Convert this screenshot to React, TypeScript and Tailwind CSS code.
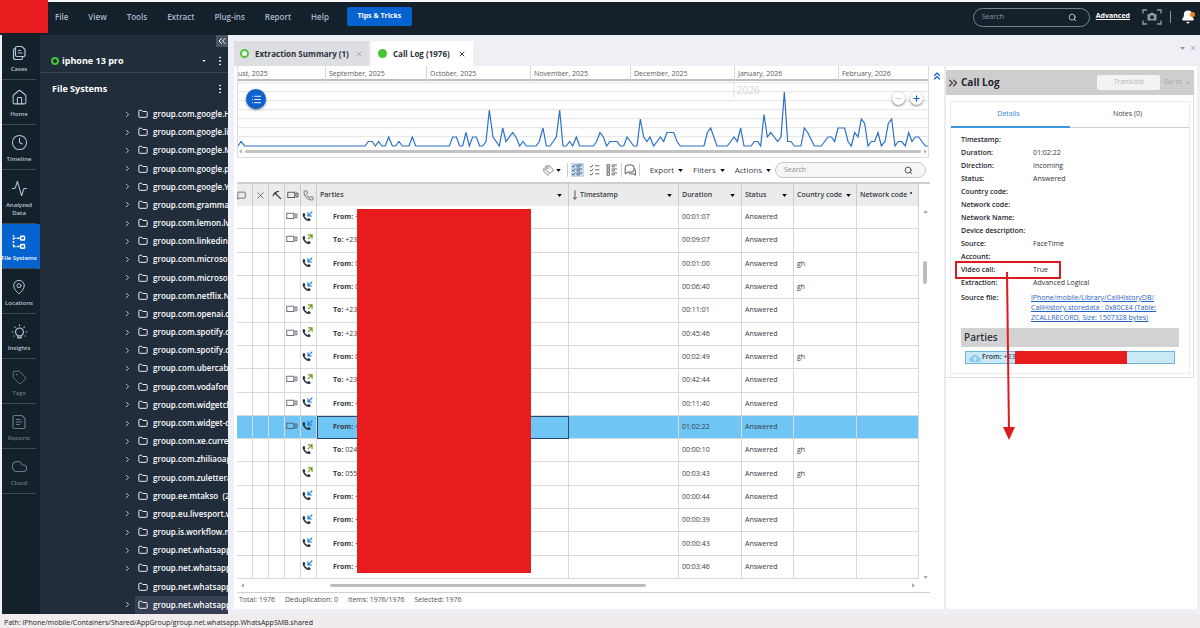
import React from "react";
import {
  Activity,
  Bell,
  ChevronRight,
  ChevronsLeft,
  ChevronsRight,
  ChevronsUp,
  Clock4,
  Cloud,
  EllipsisVertical,
  Folder,
  House,
  List,
  MapPin,
  MessageSquare,
  Minus,
  MoveDown,
  Phone,
  Plus,
  Search,
  Tag,
  Tags,
  X,
} from "lucide-react";

const menuItems = ["File", "View", "Tools", "Extract", "Plug-ins", "Report", "Help"];

const folders = [
  "group.com.google.H",
  "group.com.google.li",
  "group.com.google.M",
  "group.com.google.p",
  "group.com.google.Y",
  "group.com.grammar",
  "group.com.lemon.lv",
  "group.com.linkedin.",
  "group.com.microsof",
  "group.com.microsof",
  "group.com.netflix.N",
  "group.com.openai.cl",
  "group.com.spotify.cl",
  "group.com.spotify.cl",
  "group.com.ubercab.",
  "group.com.vodafone",
  "group.com.widgetcl",
  "group.com.widget-c",
  "group.com.xe.curren",
  "group.com.zhiliaoap",
  "group.com.zulettera",
  "group.ee.mtakso  (2",
  "group.eu.livesport.w",
  "group.is.workflow.m",
  "group.net.whatsapp",
  "group.net.whatsapp",
  "group.net.whatsapp",
  "group.net.whatsapp",
];

const months = [
  "ust, 2025",
  "September, 2025",
  "October, 2025",
  "November, 2025",
  "December, 2025",
  "January, 2026",
  "February, 2026",
];

type Call = { dir: "From" | "To"; num: string; video: boolean; time: string; code?: string; selected?: boolean };

const calls: Call[] = [
  { dir: "From", num: "+", video: true, time: "00:01:07" },
  { dir: "To", num: "+23", video: true, time: "00:09:07" },
  { dir: "From", num: "0", video: false, time: "00:01:00", code: "gh" },
  { dir: "From", num: "0", video: false, time: "00:06:40", code: "gh" },
  { dir: "To", num: "+23", video: true, time: "00:11:01" },
  { dir: "To", num: "+23", video: true, time: "00:45:46" },
  { dir: "From", num: "0", video: false, time: "00:02:49", code: "gh" },
  { dir: "To", num: "+23", video: true, time: "00:42:44" },
  { dir: "From", num: "+", video: true, time: "00:11:40" },
  { dir: "From", num: "+", video: true, time: "01:02:22", selected: true },
  { dir: "To", num: "024", video: false, time: "00:00:10", code: "gh" },
  { dir: "To", num: "055", video: false, time: "00:03:43", code: "gh" },
  { dir: "From", num: "+", video: false, time: "00:00:44" },
  { dir: "From", num: "+", video: false, time: "00:00:39" },
  { dir: "From", num: "+", video: false, time: "00:00:43" },
  { dir: "From", num: "+", video: false, time: "00:03:46" },
];

const details: [string, string][] = [
  ["Timestamp:", ""],
  ["Duration:", "01:02:22"],
  ["Direction:", "Incoming"],
  ["Status:", "Answered"],
  ["Country code:", ""],
  ["Network code:", ""],
  ["Network Name:", ""],
  ["Device description:", ""],
  ["Source:", "FaceTime"],
  ["Account:", ""],
  ["Video call:", "True"],
  ["Extraction:", "Advanced Logical"],
];

// Pairs of horizontal position and number of calls.
const activity: [number, number][] = [
  [0, 0], [9, 1], [20, 0], [381, 0], [391, 1], [403, 1], [412, 0], [422, 1], [432, 0], [442, 0], [452, 2], [463, 0],
  [473, 0], [483, 1], [493, 0], [513, 0], [523, 2], [533, 0], [634, 0], [644, 2], [655, 2], [665, 0], [674, 0],
  [684, 3], [694, 0], [704, 2], [715, 2], [725, 0], [734, 0], [744, 1], [754, 8], [765, 2], [784, 0], [794, 4],
  [804, 1], [824, 3], [834, 2], [845, 0], [855, 1], [865, 0], [894, 0], [904, 1], [915, 4], [925, 0], [936, 0],
  [955, 2], [965, 8], [975, 0], [985, 0], [995, 1], [1004, 0], [1015, 2], [1025, 0], [1066, 0], [1076, 1],
  [1086, 3], [1096, 2], [1106, 0], [1116, 1], [1137, 1], [1147, 0], [1157, 0], [1167, 2], [1187, 0], [1197, 0],
  [1207, 6], [1217, 2], [1227, 1], [1236, 2], [1247, 0], [1267, 2], [1277, 1], [1287, 3], [1307, 3], [1317, 1],
  [1327, 0], [1398, 0], [1408, 3], [1418, 4], [1437, 0], [1468, 0], [1488, 2], [1498, 1], [1508, 4], [1518, 0],
  [1539, 0], [1549, 1], [1559, 1], [1568, 0], [1578, 7], [1588, 2], [1598, 3], [1619, 1], [1629, 2], [1639, 12],
  [1649, 1], [1659, 1], [1669, 0], [1689, 0], [1699, 4], [1709, 3], [1729, 0], [1750, 0], [1770, 2], [1780, 2],
  [1790, 1], [1800, 4], [1820, 4], [1830, 1], [1840, 0], [1850, 3], [1860, 2], [1870, 6], [1880, 5], [1890, 0],
  [1900, 1], [1910, 1], [1920, 3], [1930, 0], [1941, 1], [1951, 5], [1961, 6], [1971, 0], [1981, 1], [1991, 1],
  [2002, 0], [2012, 3], [2022, 1], [2032, 2], [2042, 2], [2062, 0], [2070, 0],
];

function Caret({ className = "" }: { className?: string }) {
  return (
    <svg viewBox="0 0 6 4" aria-hidden="true" className={"h-[3px] w-[5px] shrink-0 " + className}>
      <path d="M0 0h6L3 4z" fill="currentColor" />
    </svg>
  );
}

function CasesGlyph() {
  return (
    <svg viewBox="0 0 16 16" className="h-4 w-4" fill="none" stroke="currentColor" strokeWidth="1.200" aria-hidden="true">
      <path d="M6 1.500h4.800L14 4.500V10a1.500 1.500 0 0 1-1.500 1.500H6A1.500 1.500 0 0 1 4.500 10V3A1.500 1.500 0 0 1 6 1.500z" />
      <path d="M7 5.500h3M7 8h4.500M4.500 3.500H4A1.500 1.500 0 0 0 2.500 5v7.500A2 2 0 0 0 4.500 14.500H10a1.500 1.500 0 0 0 1.500-1.500v-1.500" />
    </svg>
  );
}

function TreeGlyph() {
  return (
    <svg viewBox="0 0 16 16" className="h-4 w-4" fill="none" stroke="currentColor" strokeWidth="1.500" aria-hidden="true">
      <path d="M2.500 1v1.500M2.500 3.700v2M2.500 7v2M2.500 10.200v2M2 4.200h2.500M5.700 4.200h3M2 12.500h2.500M5.700 12.500h3" />
      <rect x="9.700" y="2.300" width="3.800" height="3.800" rx="0.600" />
      <rect x="9.700" y="10.500" width="3.800" height="3.800" rx="0.600" />
    </svg>
  );
}

function BulbGlyph() {
  return (
    <svg viewBox="0 0 18 18" className="h-[17px] w-[17px]" fill="none" stroke="currentColor" strokeWidth="1.200" aria-hidden="true">
      <circle cx="9" cy="9.500" r="4.200" />
      <path d="M7.300 13.500v2.200h3.400v-2.200M9 1.500v1.600M3.500 3.800l1.200 1.200M14.500 3.800l-1.200 1.200M.8 9.500h1.600M15.600 9.500h1.600M2.600 14l1-.6M15.400 14l-1-.6" />
    </svg>
  );
}

function ReportGlyph() {
  return (
    <svg viewBox="0 0 16 16" className="h-4 w-4" fill="none" stroke="currentColor" strokeWidth="1.200" aria-hidden="true">
      <path d="M3.500 1.500h7.500l3 3v8.500a1.500 1.500 0 0 1-1.500 1.500h-9A1.500 1.500 0 0 1 2 13V3a1.500 1.500 0 0 1 1.500-1.500z" />
      <path d="M5 5.500h5M5 8h6.500M5 10.500h4" />
    </svg>
  );
}

function CameraGlyph() {
  return (
    <svg viewBox="0 0 20 16" className="h-4 w-5" fill="none" aria-hidden="true">
      <path d="M1 4.500V1h4M15 1h4v3.500M19 11.500V15h-4M5 15H1v-3.500" stroke="#8e98a3" strokeWidth="1.400" />
      <path d="M5.500 5h2l1-1.300h3L12.500 5h2v6.500h-9z" fill="#8e98a3" />
      <circle cx="10" cy="8.200" r="1.900" fill="#14202a" />
    </svg>
  );
}

function CarvedGlyph() {
  return (
    <svg viewBox="0 0 10 10" className="h-2.5 w-2.5" fill="none" stroke="currentColor" strokeWidth="1.100" aria-hidden="true">
      <path d="M3 3l6 6M1 6.200C1.200 3.800 3.500 1.500 7 1.400" />
      <path d="M1.600 4.200L4.200 1.700 4.800 3 3 4.800z" fill="currentColor" stroke="none" />
    </svg>
  );
}

function ChatGlyph() {
  return (
    <svg viewBox="0 0 12 12" className="h-3 w-3" fill="none" stroke="currentColor" strokeWidth="0.900" aria-hidden="true">
      <path d="M3.500 1h4a2.500 2.500 0 0 1 2.500 2.500v2A2.500 2.500 0 0 1 7.500 8H3.800L1.200 10V3.500A2.500 2.500 0 0 1 3.500 1z" />
      <path d="M10.200 4.500c.8.500 1.100 1 1.100 2v4.800L9.200 9.800H6.500c-1 0-1.700-.6-2-1.500" />
    </svg>
  );
}

function VideoGlyph() {
  return (
    <svg viewBox="0 0 12 8" className="h-2 w-3 shrink-0" fill="none" stroke="currentColor" strokeWidth="0.800" aria-hidden="true">
      <rect x="0.800" y="1.200" width="7" height="5.400" />
      <path d="M9 2h2v3.800H9z" />
    </svg>
  );
}

function CallGlyph({ incoming }: { incoming: boolean }) {
  return (
    <svg viewBox="0 0 11 11" className="h-[11px] w-[11px] shrink-0" fill="none" aria-hidden="true">
      <path d="M1.700 2.600C.4 4.800 4 9.800 7.800 9.200" stroke="#27313f" strokeWidth="1.500" />
      <path d="M1.300 2.300l1.200-.2.900 2.300-1.300.9zM5.400 8.300l1-1.200 2.200.9-.3 1.400-1.300.4z" fill="#27313f" />
      {incoming ? (
        <path d="M10.300.7L6.600 4.400M6 1.200v3.800h3.900" stroke="#1a73d4" strokeWidth="1.100" />
      ) : (
        <path d="M6 5L9.700 1.300M6 .9h4.100v4.100" stroke="#6d9a1f" strokeWidth="1.100" />
      )}
    </svg>
  );
}

function ChecklistGlyph({ kind }: { kind: "dense" | "check" | "box" }) {
  return (
    <svg viewBox="0 0 12 12" className="h-3 w-3" fill="none" stroke="currentColor" strokeWidth="0.800" aria-hidden="true">
      {[1, 5, 9].map((y) => (
        <g key={y}>
          {kind === "box" ? (
            <rect x="1" y={y - 0.2} width="2.400" height="2.400" />
          ) : (
            <path d={`M1 ${y + 1}l1.200 1.200L4.200 ${y - 0.4}`} />
          )}
          <path d={kind === "check" ? `M6 ${y + 0.8}h4.500` : `M5.500 ${y}h5.500M5.500 ${y + 1.8}h3.500`} />
        </g>
      ))}
    </svg>
  );
}

const rail: { label: string; icon: React.ReactNode; tone: string }[] = [
  { label: "Cases", icon: <CasesGlyph />, tone: "h-[45px] text-[#b9c3d6]" },
  { label: "Home", icon: <House size={17} strokeWidth={1.5} />, tone: "h-[45px] text-[#b9c3d6]" },
  { label: "Timeline", icon: <Clock4 size={17} strokeWidth={1.5} />, tone: "h-[45px] text-[#b9c3d6]" },
  { label: "Analyzed Data", icon: <Activity size={17} strokeWidth={1.5} />, tone: "h-[54px] text-[#b9c3d6]" },
  { label: "File Systems", icon: <TreeGlyph />, tone: "h-[45px] bg-[#0563cf] text-white" },
  { label: "Locations", icon: <MapPin size={16} strokeWidth={1.5} />, tone: "h-[45px] text-[#b9c3d6]" },
  { label: "Insights", icon: <BulbGlyph />, tone: "h-[45px] text-[#b9c3d6]" },
  { label: "Tags", icon: <Tag size={15} strokeWidth={1.5} />, tone: "h-[45px] text-[#697585]" },
  { label: "Reports", icon: <ReportGlyph />, tone: "h-[45px] text-[#697585]" },
  { label: "Cloud", icon: <Cloud size={17} strokeWidth={1.5} />, tone: "h-[45px] text-[#697585]" },
];

function TopBar() {
  return (
    <header className="flex h-[35px] shrink-0 items-stretch border-t-2 border-[#f4f6f8] bg-[#14202a]">
      <div className="-mt-0.5 h-[33px] w-12 shrink-0 bg-[#e81c1e]" />
      <nav className="flex items-center gap-5 pb-1 pl-[7px] text-[8px] font-semibold text-[#a9b6cf]">
        {menuItems.map((m) => (
          <button key={m}>{m}</button>
        ))}
        <button className="-ml-0.5 h-[19px] w-[65px] rounded-[2px] bg-[#0563cf] text-[7px] font-bold text-white">Tips &amp; Tricks</button>
      </nav>
      <div className="ml-auto flex items-center pr-[5px] pb-[3px]">
        <label className="flex h-[19px] w-[117px] items-center rounded-full border border-[#77828f] px-2 text-[#c3ccd6]">
          <input aria-label="Search everything" placeholder="Search" className="w-full min-w-0 bg-transparent text-[7px] outline-none placeholder:text-[#8d98a5]" />
          <Search size={9} strokeWidth={2.4} className="mr-1 shrink-0" />
        </label>
        <a href="#advanced" className="mb-0.5 ml-1.5 text-[7px] font-bold text-white underline">Advanced</a>
        <button aria-label="Capture screen" className="ml-3"><CameraGlyph /></button>
        <span className="ml-2 h-3 w-px bg-[#8b95a0]" />
        <button aria-label="Notifications" className="relative ml-2.5 text-white">
          <Bell size={14} fill="currentColor" />
          <span className="absolute top-0.5 right-0 h-[5px] w-[5px] rounded-full bg-[#f58220]" />
        </button>
      </div>
    </header>
  );
}

function Rail() {
  return (
    <nav className="w-[38px] shrink-0 bg-[#14202a] text-[6px] leading-2 font-semibold">
      {rail.map((r) => (
        <button key={r.label} className={"relative flex w-full flex-col items-center justify-end gap-1 pr-1 pb-[7px] text-center " + r.tone}>
          {r.icon}
          <span className={r.label === "File Systems" ? "whitespace-nowrap" : "max-w-full"}>{r.label}</span>
          <span className="absolute bottom-0 left-0 h-px w-[34px] bg-[#3b4856]" />
        </button>
      ))}
    </nav>
  );
}

function TreePanel() {
  return (
    <aside className="flex w-[188px] shrink-0 flex-col overflow-hidden bg-[#222d3c] text-white">
      <div className="flex h-[38px] shrink-0 flex-col border-b border-[#3a4656]">
        <button aria-label="Collapse panel" className="flex h-3 w-3 shrink-0 items-center justify-center self-end bg-[#4b5466]">
          <ChevronsLeft size={12} />
        </button>
        <div className="flex items-center pt-1.5 pr-0.5 pl-[11px]">
          <span className="h-2 w-2 rounded-full border-2 border-[#45c531]" />
          <span className="ml-[3px] text-[9px] leading-4 font-bold">iphone 13 pro</span>
          <Caret className="ml-auto h-0.5! w-1!" />
          <EllipsisVertical size={12} className="ml-2" />
        </div>
      </div>
      <div className="flex h-8 shrink-0 items-center pr-0.5 pl-3">
        <h2 className="text-[9px] font-bold">File Systems</h2>
        <EllipsisVertical size={12} className="ml-auto" />
      </div>
      <ul className="flex flex-1 flex-col pl-[83px] text-[8px] font-semibold">
        {folders.map((f, i) => (
          <li key={i} className="flex flex-1 items-center whitespace-nowrap">
            <span className="w-3 shrink-0">{i !== 26 && <ChevronRight size={9} strokeWidth={2.5} className="text-[#c5cddb]" />}</span>
            <span className={"flex flex-1 items-center self-stretch pl-[3px] " + (i === 27 ? "bg-[#363f54]" : "")}>
              <Folder size={10} strokeWidth={2.2} className="mr-[5px] shrink-0" />
              <span className="whitespace-pre">{f}</span>
            </span>
          </li>
        ))}
      </ul>
    </aside>
  );
}

function Timeline() {
  const line = activity.map(([x, n]) => `${x},${195 - n * 13.5}`).join(" ");
  return (
    <section className="relative mr-[15px] ml-[3px] border-x border-b border-[#dcdcdc]" aria-label="Call activity">
      <div className="grid h-[15px] grid-cols-[87fr_101fr_104fr_100fr_104fr_104fr_90fr] border-b-2 border-[#bdbdbd] text-[7px] leading-[15px] text-[#555b62]">
        {months.map((m, i) => (
          <span key={m} className={i ? "border-l border-[#d9d9d9] pl-[3px]" : ""}>{m}</span>
        ))}
      </div>
      <div className="relative h-[68px]">
        <svg viewBox="0 0 2070 204" preserveAspectRatio="none" className="h-full w-full" aria-hidden="true">
          {[5, 32, 59, 86, 113, 140, 167].map((y) => (
            <path key={y} d={`M0 ${y}H2070`} stroke="#e6e4e2" strokeWidth="1" vectorEffect="non-scaling-stroke" />
          ))}
          <path d="M1488 0V50" stroke="#dddddd" vectorEffect="non-scaling-stroke" />
          <polyline points={line} fill="none" stroke="#2b71c8" strokeWidth="1.200" vectorEffect="non-scaling-stroke" />
        </svg>
        <span className="absolute top-0.5 left-[72.300%] text-[10px] text-[#d4d4d4]">2026</span>
        <button aria-label="Legend" className="absolute top-2 left-2 flex h-5 w-5 items-center justify-center rounded-full bg-[#0f62cc] text-white shadow-sm shadow-black/40">
          <List size={11} />
        </button>
        <button aria-label="Zoom out" className="absolute top-[11px] right-[23px] flex h-[13px] w-[13px] items-center justify-center rounded-full bg-white text-[#b9bdc2] shadow-sm shadow-black/40">
          <Minus size={9} />
        </button>
        <button aria-label="Zoom in" className="absolute top-[11px] right-[5px] flex h-[13px] w-[13px] items-center justify-center rounded-full bg-white text-[#0f62cc] shadow-sm shadow-black/40">
          <Plus size={9} strokeWidth={3} />
        </button>
      </div>
      <div className="flex items-center gap-0.5 pt-px pb-1 text-[#b5b5b5]">
        <Caret className="rotate-90" />
        <span className="h-[3px] flex-1 rounded-full bg-[#c2c2c2]" />
        <Caret className="-rotate-90" />
      </div>
    </section>
  );
}

function Toolbar() {
  return (
    <div className="mr-3.5 ml-[3px] flex h-[26px] items-center justify-end border-b-2 border-[#cfcfcf] pr-1 text-[8px] text-[#3b424a]">
      <button aria-label="Tags" className="flex items-center gap-0.5 pr-1.5">
        <Tags size={11} strokeWidth={1.5} />
        <Caret className="text-black" />
      </button>
      <span className="flex items-center gap-[5px] border-x border-[#cccccc] px-[3px]">
        <button aria-label="Detailed list" className="flex h-3.5 w-[13px] items-center justify-center bg-[#bfdcf5]"><ChecklistGlyph kind="dense" /></button>
        <button aria-label="Checked list" className="flex h-3.5 w-3 items-center justify-center"><ChecklistGlyph kind="check" /></button>
        <button aria-label="Simple list" className="flex h-3.5 w-3 items-center justify-center"><ChecklistGlyph kind="box" /></button>
      </span>
      <button aria-label="Conversations" className="border-r border-[#cccccc] pr-[3px] pl-0.5"><ChatGlyph /></button>
      <button className="ml-2.5 flex items-center gap-1">Export <Caret className="text-black" /></button>
      <button className="ml-2.5 flex items-center gap-1">Filters <Caret className="text-black" /></button>
      <button className="ml-2.5 flex items-center gap-1">Actions <Caret className="text-black" /></button>
      <label className="ml-1 flex h-4 w-[151px] items-center rounded-full border border-[#c9c9c9] bg-[#f6f6f6] px-2">
        <input aria-label="Search table" placeholder="Search" className="w-full min-w-0 bg-transparent text-[7px] outline-none placeholder:text-[#8a8f94]" />
        <Search size={9} strokeWidth={2.4} className="mr-1 shrink-0" />
      </label>
    </div>
  );
}

function CallTable() {
  const head = "border-r border-[#cccccc] font-semibold";
  const cell = "border-r border-b border-[#d9d9d9] px-[3px]";
  return (
    <div className="mr-[25px] ml-[3px] flex">
      <div className="relative min-w-0 flex-1">
        <table className="h-[395px] w-full table-fixed border-separate border-spacing-0 text-left text-[7px] leading-3 text-[#343b44]">
          <colgroup>
            <col className="w-4" />
            <col className="w-4" />
            <col className="w-4" />
            <col className="w-4" />
            <col className="w-4" />
            <col className="w-[252px]" />
            <col className="w-[110px]" />
            <col className="w-[63px]" />
            <col className="w-[52px]" />
            <col className="w-[63px]" />
            <col />
          </colgroup>
          <thead className="bg-[#ebebeb]">
            <tr className="h-[22px]">
              <th className={head} aria-label="Notes"><MessageSquare size={9} strokeWidth={1.8} /></th>
              <th className={head} aria-label="Deleted"><X size={11} strokeWidth={1.4} className="mx-auto" /></th>
              <th className={head} aria-label="Carved"><span className="flex justify-center"><CarvedGlyph /></span></th>
              <th className={head} aria-label="Video"><span className="flex justify-center"><VideoGlyph /></span></th>
              <th className={head} aria-label="Direction"><Phone size={11} strokeWidth={1.4} className="mx-auto" /></th>
              <th className={head}><span className="flex items-center justify-between pr-1.5 pl-[3px]">Parties <Caret className="text-black" /></span></th>
              <th className={head}><span className="flex items-center pr-1.5 pl-[3px]"><MoveDown size={10} className="-ml-0.5" />Timestamp <Caret className="ml-auto text-black" /></span></th>
              <th className={head}><span className="flex items-center justify-between pr-1.5 pl-[3px]">Duration <Caret className="text-black" /></span></th>
              <th className={head}><span className="flex items-center justify-between pr-1.5 pl-[3px]">Status <Caret className="text-black" /></span></th>
              <th className={head}><span className="flex items-center justify-between pr-[5px] pl-[3px] whitespace-nowrap">Country code <Caret className="text-black" /></span></th>
              <th className={head}><span className="flex items-center gap-[3px] pl-[3px] whitespace-nowrap">Network code <span className="-mt-1 h-0.5 w-0.5 bg-[#555]" /></span></th>
            </tr>
          </thead>
          <tbody>
            {calls.map((c) => (
              <tr key={c.time} className={c.selected ? "bg-[#6fc6f4]" : ""}>
                <td className={cell} />
                <td className={cell} />
                <td className={cell} />
                <td className={cell + " text-[#4a525c]"}>{c.video && <span className="-mr-px -ml-[3px] mb-0.5 flex justify-center"><VideoGlyph /></span>}</td>
                <td className={cell}><span className="-mr-px -ml-[3px] mb-0.5 flex justify-center"><CallGlyph incoming={c.dir === "From"} /></span></td>
                <td className={c.selected ? "border-r border-b border-[#2b4a63] pl-4 inset-shadow-[1px_1px_0_#2b4a63]" : "border-r border-b border-[#d9d9d9] pl-4"}>
                  <b className="font-bold">{c.dir}:</b> {c.num}
                </td>
                <td className={cell} />
                <td className={cell}>{c.time}</td>
                <td className={cell}>Answered</td>
                <td className={cell}>{c.code}</td>
                <td className={cell} />
              </tr>
            ))}
          </tbody>
        </table>
        <div className="absolute top-[25px] bottom-1.5 left-[120px] w-[174px] bg-[#e81c1e]" />
        <div className="absolute top-[26px] -right-2.5 bottom-0 flex w-2 flex-col items-center text-[#a8a8a8]">
          <Caret className="rotate-180" />
          <span className="mt-12 h-[23px] w-1 rounded-full bg-[#bdbdbd]" />
          <Caret className="mt-auto" />
        </div>
      </div>
    </div>
  );
}

function DetailsPane() {
  return (
    <aside className="flex w-[253px] shrink-0 flex-col border-l-2 border-[#ececee] pt-1 pr-[3px]">
      <div className="flex h-[25px] shrink-0 items-center bg-[#cfcdcd] pr-1">
        <ChevronsRight size={14} className="text-[#333]" />
        <h2 className="ml-px text-[10px] font-bold text-[#1f262e]">Call Log</h2>
        <button className="ml-auto h-[15px] w-[63px] rounded-[2px] bg-[#f3f3f3] text-[7px] text-[#b5b5b5]">Translate</button>
        <button className="ml-1 flex items-center gap-1 text-[7px] text-[#a5a5a5]">Go to <Caret className="h-0.5! w-1!" /></button>
      </div>
      <div className="border-r border-b border-[#dedede] pr-[3px] pb-[3px] pl-1">
        <div className="mt-1.5 border border-[#ececec]">
          <div role="tablist" className="flex h-[26px] border-b border-[#cfcfcf] text-[7px]">
            <button role="tab" aria-selected="true" className="-mb-px flex-1 border-b-2 border-[#3b97dc] pr-1 text-[#2f86cf]">Details</button>
            <button role="tab" aria-selected="false" className="flex-1 pr-1 text-[#3b424a]">Notes (0)</button>
          </div>
          <div className="relative px-2.5 pt-1.5 pb-[9px] text-[7px] text-[#2c333b]">
            <dl>
              {details.map(([k, v]) => (
                <div key={k} className="flex h-[13px] items-center">
                  <dt className="w-[72px] font-semibold whitespace-nowrap text-[#1d242c]">{k}</dt>
                  <dd>{v}</dd>
                </div>
              ))}
              <div className="flex pt-[3px] leading-[10px]">
                <dt className="w-[70px] font-semibold text-[#1d242c]">Source file:</dt>
                <dd>
                  <a href="#source" className="text-[#1f63c4] underline">
                    iPhone/mobile/Library/CallHistoryDB/<br />CallHistory.storedata : 0x80CE4 (Table:<br />ZCALLRECORD, Size: 1507328 bytes)
                  </a>
                </dd>
              </div>
            </dl>
            <h3 className="mt-[5px] h-[19px] bg-[#d2d2d2] pl-[3px] text-[10px] leading-[19px] font-semibold">Parties</h3>
            <div className="mx-1 mt-1 flex h-[13px] items-center border border-[#6fb5da] bg-[#c9e9f7] pl-[3px]">
              <svg viewBox="0 0 12 10" className="h-2.5 w-3 shrink-0" aria-hidden="true">
                <path d="M3 9a2.500 2.500 0 0 1-.3-5A3.500 3.500 0 0 1 9.300 4 2.500 2.500 0 0 1 9 9z" fill="#8cc9f2" />
                <path d="M6 8V4.500M4.500 6L6 4.400 7.500 6" stroke="#fff" fill="none" />
              </svg>
              <span className="ml-px whitespace-nowrap"><b className="font-semibold">From:</b> +23</span>
              <span className="h-[13px] w-[112px] shrink-0 bg-[#e81c1e]" />
            </div>
            <div className="absolute top-[133px] left-1 h-[18px] w-[106px] border-2 border-[#e0191e]" />
            <svg viewBox="0 0 14 170" className="absolute top-[144px] left-[51px] h-[170px] w-3.5" aria-hidden="true">
              <path d="M5 0L7 160" stroke="#e0191e" strokeWidth="2" fill="none" />
              <path d="M1 155h12L7 168z" fill="#e0191e" />
            </svg>
          </div>
        </div>
      </div>
    </aside>
  );
}

export default function App() {
  return (
    <div className="flex min-h-screen flex-col bg-[#eef0f5] font-['Open_Sans','Noto_Sans',sans-serif] text-[#2c333b]">
      <TopBar />
      <div className="flex flex-1 pl-0.5">
        <Rail />
        <TreePanel />
        <main className="flex min-w-0 flex-1 flex-col pr-[3px] pb-[5px] pl-1.5">
          <div className="flex h-[31px] shrink-0 items-end gap-0.5 text-[8px] font-bold">
            <div className="flex h-[25px] w-[135px] items-center bg-[#dcdee2] px-1.5">
              <span className="h-[9px] w-[9px] shrink-0 rounded-full border-2 border-[#55c537] bg-white" />
              <span className="ml-1.5 whitespace-nowrap">Extraction Summary (1)</span>
              <button aria-label="Close Extraction Summary" className="ml-auto text-[#8f959c]"><X size={8} /></button>
            </div>
            <div className="flex h-[25px] w-[102px] items-center bg-white px-[7px]">
              <span className="h-[9px] w-[9px] shrink-0 rounded-full bg-[#45c531]" />
              <span className="ml-1.5 whitespace-nowrap">Call Log (1976)</span>
              <button aria-label="Close Call Log" className="ml-auto"><X size={8} strokeWidth={2.8} /></button>
            </div>
            <div className="mb-3.5 ml-auto flex items-center gap-1 text-[#8c929a]">
              <Caret />
              <button aria-label="Close pane"><X size={8} /></button>
            </div>
          </div>
          <div className="flex flex-1 bg-white">
            <div className="relative min-w-0 flex-1">
              <Timeline />
              <button aria-label="Collapse timeline" className="absolute top-1 right-px text-[#0f62cc]"><ChevronsUp size={12} strokeWidth={2.4} /></button>
              <Toolbar />
              <CallTable />
              <div className="mr-3.5 ml-[3px] flex h-3.5 items-center border-b border-[#d0d0d0] pr-3.5 pl-[3px] text-[#a8a8a8]">
                <Caret className="rotate-90" />
                <span className="ml-[85px] h-[3px] w-[316px] rounded-full bg-[#bdbdbd]" />
                <Caret className="ml-auto -rotate-90" />
              </div>
              <div className="flex gap-2.5 pl-[5px] text-[7px] leading-[14px] text-[#4a5058]">
                <span>Total: 1976</span>
                <span>Deduplication: 0</span>
                <span>Items: 1976/1976</span>
                <span>Selected: 1976</span>
              </div>
            </div>
            <DetailsPane />
          </div>
        </main>
      </div>
      <footer className="h-3.5 shrink-0 bg-[#f0ecec] pl-1 text-[7px] leading-[18px] text-[#1f2329]">
        Path: iPhone/mobile/Containers/Shared/AppGroup/group.net.whatsapp.WhatsAppSMB.shared
      </footer>
    </div>
  );
}
